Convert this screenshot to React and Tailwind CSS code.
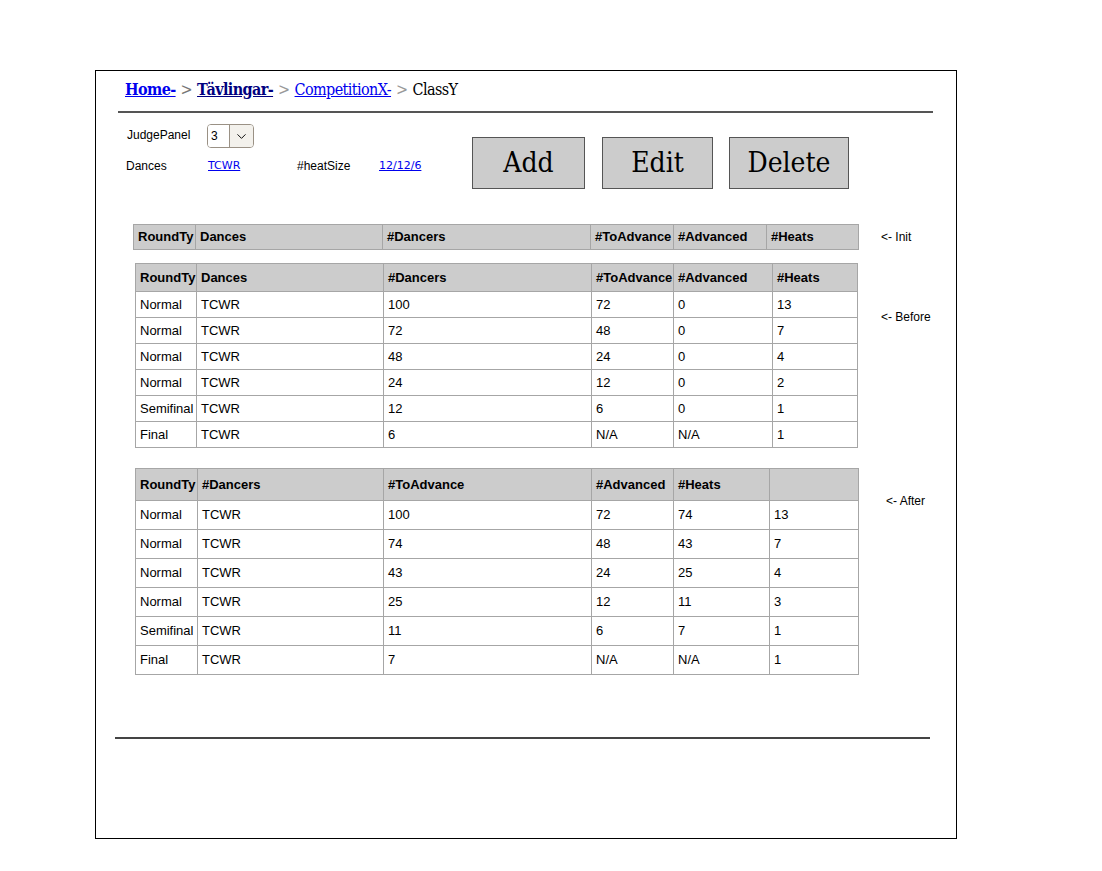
import { ChevronDown } from "lucide-react";

const initHead = ["RoundTy", "Dances", "#Dancers", "#ToAdvance", "#Advanced", "#Heats"];

const beforeRows = [
  ["Normal", "TCWR", "100", "72", "0", "13"],
  ["Normal", "TCWR", "72", "48", "0", "7"],
  ["Normal", "TCWR", "48", "24", "0", "4"],
  ["Normal", "TCWR", "24", "12", "0", "2"],
  ["Semifinal", "TCWR", "12", "6", "0", "1"],
  ["Final", "TCWR", "6", "N/A", "N/A", "1"],
];

const afterHead = ["RoundTy", "#Dancers", "#ToAdvance", "#Advanced", "#Heats", ""];
const afterRows = [
  ["Normal", "TCWR", "100", "72", "74", "13"],
  ["Normal", "TCWR", "74", "48", "43", "7"],
  ["Normal", "TCWR", "43", "24", "25", "4"],
  ["Normal", "TCWR", "25", "12", "11", "3"],
  ["Semifinal", "TCWR", "11", "6", "7", "1"],
  ["Final", "TCWR", "7", "N/A", "N/A", "1"],
];

// grid table, column widths passed as a full class name
function Grid({ cols, head, rows = [], headH, rowH }) {
  return (
    <div className={`grid ${cols} border-l border-t border-[#a6a6a6] text-[13px] text-black`}>
      {head.map((h, i) => (
        <div
          key={"h" + i}
          className={`${headH} bg-[#cccccc] border-r border-b border-[#a6a6a6] font-bold px-[4px] flex items-center whitespace-nowrap overflow-hidden`}
        >
          {h}
        </div>
      ))}
      {rows.map((r, ri) =>
        r.map((c, ci) => (
          <div
            key={ri + "-" + ci}
            className={`${rowH} bg-white border-r border-b border-[#a6a6a6] px-[4px] flex items-center whitespace-nowrap overflow-hidden`}
          >
            {c}
          </div>
        ))
      )}
    </div>
  );
}

function SketchButton({ label, w }) {
  return (
    <button
      className={`${w} h-[52px] bg-[#cccccc] border border-[#555] text-[28px] text-black font-['DejaVu_Serif',serif] font-stretch-condensed flex items-center justify-center`}
    >
      {label}
    </button>
  );
}

export default function App() {
  return (
    <div className="w-[1102px] h-[871px] bg-white font-['Liberation_Sans',Arial,sans-serif] pt-[70px] pl-[95px]">
      <div className="w-[862px] h-[769px] border border-black flex flex-col">
        {/* breadcrumb */}
        <div className="ml-[29px] mt-[9px] h-[20px] flex items-center gap-[5px] text-[16px] font-['DejaVu_Serif',serif] font-stretch-condensed tracking-[-0.6px]">
          <a className="text-[#0000ee] font-bold underline">Home-</a>
          <span className="text-[#777]">&gt;</span>
          <a className="text-[#000080] font-bold underline">Tävlingar-</a>
          <span className="text-[#999]">&gt;</span>
          <a className="text-[#0000ee] underline">CompetitionX-</a>
          <span className="text-[#999]">&gt;</span>
          <span className="text-black">ClassY</span>
        </div>
        <div className="ml-[22px] mt-[11px] w-[815px] h-[2px] bg-[#555]" />

        {/* controls */}
        <div className="flex mt-[11px]">
          <div className="w-[376px] text-[12px] text-black">
            <div className="flex items-center h-[24px] ml-[31px]">
              <span className="w-[80px] mb-[3px]">JudgePanel</span>
              <div className="w-[47px] h-[24px] border border-[#9a9185] rounded-[4px] flex overflow-hidden">
                <span className="w-[21px] flex items-center pl-[3px] bg-white">3</span>
                <span className="flex-1 border-l border-[#9a9185] bg-[#f3f1ec] flex items-center justify-center">
                  <ChevronDown size={15} strokeWidth={1.5} />
                </span>
              </div>
            </div>
            <div className="flex items-center h-[16px] mt-[10px] ml-[30px]">
              <span className="w-[82px]">Dances</span>
              <a className="w-[89px] text-[11px] text-[#0000ee] underline font-['DejaVu_Sans',sans-serif]">TCWR</a>
              <span className="w-[82px]">#heatSize</span>
              <a className="text-[11px] text-[#0000ee] underline font-['DejaVu_Sans',sans-serif]">12/12/6</a>
            </div>
          </div>
          <div className="flex mt-[13px]">
            <SketchButton label="Add" w="w-[113px]" />
            <div className="w-[17px]" />
            <SketchButton label="Edit" w="w-[111px]" />
            <div className="w-[16px]" />
            <SketchButton label="Delete" w="w-[120px]" />
          </div>
        </div>

        {/* init */}
        <div className="flex items-center mt-[35px] ml-[37px]">
          <Grid
            cols="grid-cols-[62px_187px_208px_83px_93px_92px]"
            head={initHead}
            headH="h-[25px]"
          />
          <span className="ml-[22px] text-[12px]">&lt;- Init</span>
        </div>

        {/* before */}
        <div className="flex items-start mt-[13px] ml-[39px]">
          <Grid
            cols="grid-cols-[61px_187px_208px_82px_99px_85px]"
            head={initHead}
            rows={beforeRows}
            headH="h-[28px]"
            rowH="h-[26px]"
          />
          <span className="ml-[23px] mt-[45px] text-[12px]">&lt;- Before</span>
        </div>

        {/* after */}
        <div className="flex items-start mt-[20px] ml-[39px]">
          <Grid
            cols="grid-cols-[62px_186px_208px_82px_96px_89px]"
            head={afterHead}
            rows={afterRows}
            headH="h-[32px]"
            rowH="h-[29px]"
          />
          <span className="ml-[27px] mt-[24px] text-[12px]">&lt;- After</span>
        </div>

        <div className="ml-[19px] mt-[62px] w-[815px] h-[2px] bg-[#444]" />
      </div>
    </div>
  );
}
